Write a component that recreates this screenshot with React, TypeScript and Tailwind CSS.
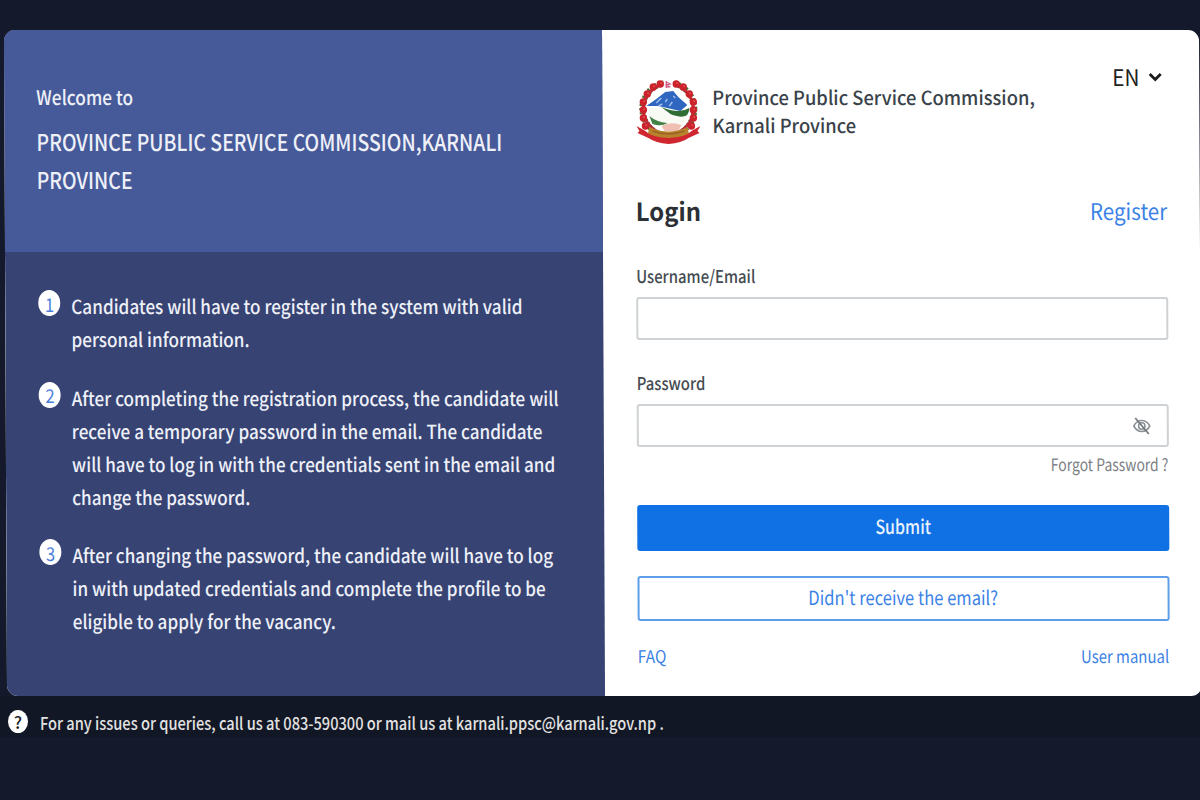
const STEPS = [
  ["Candidates will have to register in the system with valid", "personal information."],
  [
    "After completing the registration process, the candidate will",
    "receive a temporary password in the email. The candidate",
    "will have to log in with the credentials sent in the email and",
    "change the password.",
  ],
  [
    "After changing the password, the candidate will have to log",
    "in with updated credentials and complete the profile to be",
    "eligible to apply for the vacancy.",
  ],
];

// rhododendron garland, from the left ribbon end round to the right one
const FLOWERS = [
  [9, 46], [7, 38], [7, 30], [7, 22], [11, 14], [17, 7], [24, 4],
  [40, 4], [47, 7], [53, 14], [57, 22], [57, 30], [57, 38], [55, 46],
];

function Emblem() {
  return (
    <svg viewBox="0 0 64 64" className="h-16 w-16 shrink-0">
      <ellipse cx="32" cy="29" rx="26" ry="26" fill="none" stroke="#4d6b33" strokeWidth="6" strokeDasharray="2 2" />
      <ellipse cx="32" cy="29" rx="25" ry="25" fill="none" stroke="#b8303a" strokeWidth="3" />
      <ellipse cx="32" cy="30" rx="22" ry="23" fill="#fff" />
      <path d="M27 0h10v8H27z" fill="#fff" />
      <path d="M10 26 L20 19 L29 12 L37 11 L42 17 L51 25 L44 31 L22 26 Z" fill="#2f66c0" />
      <path d="M20 23l5-5M29 22l2-3M33 26l3-4M37 16l2 2M22 26l4-2" stroke="#9dbbe8" strokeWidth="1.5" fill="none" />
      <path d="M25 27 Q34 31 42 31 Q48 31 53 28 Q53 35 47 37 Q38 36 34 34 Z" fill="#2f6d35" />
      <path d="M12 27 Q21 27 32 34 Q40 39 49 36 Q51 42 45 47 L22 46 Q12 41 12 27Z" fill="#f8faf4" />
      <path d="M13 36 Q20 42 31 43 Q25 47 16 44Z" fill="#438247" />
      <path d="M25 46 Q34 41 45 45 L42 51 L28 51Z" fill="#efc0b2" />
      {FLOWERS.map(([x, y]) => (
        <g key={`${x}-${y}`}>
          <circle cx={x} cy={y} r="3.7" fill="#cb222c" />
          <circle cx={x + 0.8} cy={y - 0.8} r="0.9" fill="#de555c" />
        </g>
      ))}
      <path d="M30 1v7M30 2l4 2-4 1 4 2h-4" stroke="#d0527c" strokeWidth="1.2" fill="none" />
      <path d="M13 47 Q32 56 51 47 L53 56 Q32 62 11 56Z" fill="#b8812c" />
      <path d="M16 51 Q32 57 48 51" stroke="#9a6524" strokeWidth="1.5" fill="none" />
      <path d="M0 46 L9 51 Q14 57 32 58 Q50 57 55 51 L64 46 L61 51 L63 53 L52 58 Q45 63 32 64 Q19 63 12 58 L1 53 L3 51Z" fill="#cf2630" />
    </svg>
  );
}

function EyeOff() {
  return (
    <svg viewBox="0 0 18 18" className="h-[18px] w-[18px]" fill="none" stroke="#8d9297" strokeWidth="1.6">
      <path d="M1 9 Q4 3.5 9 3.5 Q14 3.5 17 9 Q14 14.5 9 14.5 Q4 14.5 1 9Z" />
      <circle cx="9" cy="9" r="3.2" />
      <path d="M2.5 1 L16 17" stroke="#70767b" />
    </svg>
  );
}

export default function App() {
  return (
    <div className="h-[800px] w-[1200px] overflow-hidden bg-[#14192b] pt-[30px] font-['Noto_Sans_CJK_SC','Open_Sans',sans-serif] font-medium whitespace-nowrap">
      <div className="ml-1 flex h-[666px] w-[1195px] origin-top-left skew-x-[0.26deg] overflow-hidden rounded-[11px] bg-white">
        <section className="flex w-[598px] shrink-0 flex-col bg-[#364373] text-[#eef0f8]">
          <header className="h-[222px] bg-[#465a99] pt-[53px] pl-8">
            <p className="origin-left scale-x-[0.866] text-[20px] leading-7">Welcome to</p>
            <h1 className="mt-[12px] origin-left scale-x-[0.845] text-[23px] leading-[37.5px]">
              PROVINCE PUBLIC SERVICE COMMISSION,KARNALI
              <br />
              PROVINCE
            </h1>
          </header>

          <ol className="flex flex-col gap-[25.5px] pt-[37px] pl-[33px]">
            {STEPS.map((lines, i) => (
              <li key={i} className="flex gap-[11px]">
                <span className="mt-px flex h-[26px] w-[22px] shrink-0 items-center justify-center rounded-[50%] bg-white text-[19px] leading-none font-normal text-[#4c7fdc]">
                  <span className="scale-x-[0.87]">{i + 1}</span>
                </span>
                <p className="origin-left scale-x-[0.878] text-[19.5px] leading-[33px]">
                  {lines.map((line) => (
                    <span key={line} className="block">{line}</span>
                  ))}
                </p>
              </li>
            ))}
          </ol>
        </section>

        <section className="flex w-[597px] shrink-0 flex-col pr-8 pl-[33px]">
          <div className="flex h-[165px] items-start justify-between pt-8">
            <div className="flex gap-3 pt-[18px] pl-px">
              <Emblem />
              <p className="origin-left scale-x-[0.942] pt-[2.5px] text-[19.5px] leading-7 text-[#3a424a]">
                Province Public Service Commission,
                <br />
                Karnali Province
              </p>
            </div>
            <button className="flex items-center gap-[9px] pr-[5px] text-[23px] leading-7 font-normal text-[#222]">
              <span className="origin-right scale-x-90">EN</span>
              <svg viewBox="0 0 14 10" className="mt-[2px] h-[10px] w-[14px]">
                <path d="M1.5 2 L7 7.5 L12.5 2" fill="none" stroke="#1c1c1c" strokeWidth="2.8" />
              </svg>
            </button>
          </div>

          <div className="flex items-center justify-between leading-[30px]">
            <h2 className="origin-left scale-x-[0.955] text-[25px] font-bold text-[#2b3036]">Login</h2>
            <a className="mr-px origin-right scale-x-[0.895] text-[23px] font-normal text-[#3b82e6]">Register</a>
          </div>

          <label className="mt-10 origin-left scale-x-[0.853] text-[17.5px] leading-[22px] text-[#454b52]">Username/Email</label>
          <input className="mt-[10px] h-[43px] shrink-0 rounded-[3px] border-2 border-[#cfd2d4]" />

          <label className="mt-8 origin-left scale-x-[0.853] text-[17.5px] leading-[22px] text-[#454b52]">Password</label>
          <div className="mt-[10px] flex h-[43px] shrink-0 items-center justify-end rounded-[3px] border-2 border-[#cfd2d4] pr-4">
            <EyeOff />
          </div>
          <a className="mt-[6px] mr-px origin-right scale-x-[0.82] self-end text-[17px] leading-[22px] font-normal text-[#7c8084]">Forgot Password ?</a>

          <button className="mt-[30px] h-[46px] shrink-0 rounded-[3px] bg-[#1071e5] pb-[5px] text-[19.5px] text-[#e9f2fd]">
            <span className="inline-block scale-x-[0.82]">Submit</span>
          </button>
          <button className="mt-[25px] h-[45px] shrink-0 rounded-[3px] border-2 border-[#5f9fea] pb-[4px] text-[19.5px] font-normal text-[#3b82e6]">
            <span className="inline-block scale-x-[0.85]">Didn't receive the email?</span>
          </button>
          <div className="mt-[24px] flex justify-between text-[17.5px] leading-[22px] font-normal text-[#3b7fe4]">
            <a className="origin-left scale-x-[0.88]">FAQ</a>
            <a className="mr-px origin-right scale-x-[0.854]">User manual</a>
          </div>
        </section>
      </div>

      <footer className="flex h-[41px] items-start bg-[#121725] pt-[14px] pl-2">
        <span className="flex h-[23px] w-5 items-center justify-center rounded-[50%] bg-white text-[17px] leading-none text-[#222]">?</span>
        <p className="ml-3 origin-left scale-x-[0.86] text-[17px] leading-[26px] text-[#e2e2e2]">
          For any issues or queries, call us at 083-590300 or mail us at karnali.ppsc@karnali.gov.np .
        </p>
      </footer>
    </div>
  );
}
